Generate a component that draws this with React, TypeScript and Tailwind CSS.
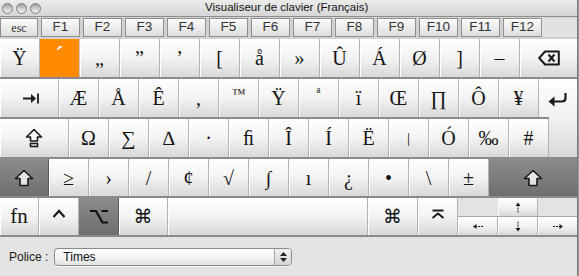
import type { ReactNode } from 'react'

// Keyboard viewer panel (Mac OS X, French layout, option+shift held)

const serif = "font-['Liberation_Serif','DejaVu_Serif',serif]"
const sans = "font-['Liberation_Sans','DejaVu_Sans',sans-serif]"

type Tone = 'light' | 'dark' | 'orange'

function Key({ w, tone = 'light', children, className = '' }: { w: string, tone?: Tone, children?: ReactNode, className?: string }) {
  const toneCls
    = tone === 'dark'
      ? 'border-[#5c5c5c] bg-linear-to-b from-[#8c8c8c] to-[#6e6e6e] text-[#111]'
      : tone === 'orange'
        ? 'border-[#c9c9c9] bg-[#ff8a00] text-white'
        : 'border-[#b2b2b2] bg-linear-to-b from-[#ffffff] via-[#f3f3f3] to-[#d8d8d8] text-[#141414] shadow-[inset_1px_0_0_#ffffff]'
  return (
    <div className={`${w} ${toneCls} flex h-full shrink-0 items-center justify-center border-r ${className}`}>
      {children}
    </div>
  )
}

function G({ children, className = 'text-[20px]' }: { children: ReactNode, className?: string }) {
  return <span className={`${serif} ${className} leading-none`}>{children}</span>
}

function ShiftIcon() {
  return (
    <svg width="20" height="18" viewBox="0 0 20 18">
      <path d="M10 1.5 L18.5 9.5 H14 V16.5 H6 V9.5 H1.5 Z" fill="#e4e4e4" stroke="#1a1a1a" strokeWidth="1.6" strokeLinejoin="round" />
    </svg>
  )
}

function CapsIcon() {
  return (
    <svg width="18" height="20" viewBox="0 0 18 20">
      <path d="M9 1.5 L16.5 9 H12.5 V13 H5.5 V9 H1.5 Z" fill="#fafafa" stroke="#1a1a1a" strokeWidth="1.6" strokeLinejoin="round" />
      <rect x="5.5" y="15.5" width="7" height="3" fill="#fafafa" stroke="#1a1a1a" strokeWidth="1.6" />
    </svg>
  )
}

function TabIcon() {
  return (
    <svg width="17" height="11" viewBox="0 0 17 11">
      <path d="M0 5.5 H10" stroke="#1a1a1a" strokeWidth="2" />
      <path d="M8 1 L13 5.5 L8 10 Z" fill="#1a1a1a" />
      <path d="M15 0.5 V10.5" stroke="#1a1a1a" strokeWidth="1.8" />
    </svg>
  )
}

function ReturnIcon() {
  return (
    <svg width="20" height="15" viewBox="0 0 20 15">
      <path d="M17.5 1 V6 Q17.5 9.5 14 9.5 H5" fill="none" stroke="#1a1a1a" strokeWidth="2.2" />
      <path d="M0.5 9.5 L6.5 4.5 V14.5 Z" fill="#1a1a1a" />
    </svg>
  )
}

function BackspaceIcon() {
  return (
    <svg width="22" height="16" viewBox="0 0 22 16">
      <path d="M1.2 8 L7 1.5 H20.8 V14.5 H7 Z" fill="none" stroke="#1a1a1a" strokeWidth="2" strokeLinejoin="round" />
      <path d="M10.5 4.5 L16.5 11.5 M16.5 4.5 L10.5 11.5" stroke="#1a1a1a" strokeWidth="2" />
    </svg>
  )
}

function CaretIcon() {
  return (
    <svg width="14" height="9" viewBox="0 0 14 9">
      <path d="M1.5 8 L7 2 L12.5 8" fill="none" stroke="#1a1a1a" strokeWidth="2.2" />
    </svg>
  )
}

function OptionIcon() {
  return (
    <svg width="20" height="15" viewBox="0 0 20 15">
      <path d="M1 2 H7 L13.5 13.5 H19 M12.5 2 H19" fill="none" stroke="#111" strokeWidth="2.2" />
    </svg>
  )
}

function EnterIcon() {
  return (
    <svg width="14" height="10" viewBox="0 0 14 10">
      <path d="M1.5 1.5 H12.5" stroke="#1a1a1a" strokeWidth="2" />
      <path d="M1.5 9 L7 4.5 L12.5 9" fill="none" stroke="#1a1a1a" strokeWidth="2" />
    </svg>
  )
}

function SmallArrow({ dir }: { dir: 'up' | 'down' | 'left' | 'right' }) {
  const rot = { up: 'rotate-0', down: 'rotate-180', left: '-rotate-90', right: 'rotate-90' }[dir]
  return (
    <svg width="8" height="11" viewBox="0 0 8 11" className={rot}>
      <path d="M4 10.5 V2" stroke="#1a1a1a" strokeWidth="1" strokeDasharray="2 1" />
      <path d="M1.5 4 L4 0.5 L6.5 4 Z" fill="#1a1a1a" />
    </svg>
  )
}

function Row({ h = 'h-[40px]', children }: { h?: string, children: ReactNode }) {
  return <div className={`flex ${h} border-b-2 border-[#8b8b8b]`}>{children}</div>
}

const row1 = ['„', '”', '’', '[', 'å', '»', 'Û', 'Á', 'Ø', ']', '–']
const row2 = ['Æ', 'Å', 'Ê', ',', '™', 'Ÿ', 'ª', 'ï', 'Œ', '∏', 'Ô', '¥']
const row3 = ['Ω', '∑', '∆', '·', 'ﬁ', 'Î', 'Í', 'Ë', '|', 'Ó', '‰', '#']
const row4 = ['≥', '›', '/', '¢', '√', '∫', 'ı', '¿', '•', '\\', '±']
const fkeys = ['F1', 'F2', 'F3', 'F4', 'F5', 'F6', 'F7', 'F8', 'F9', 'F10', 'F11', 'F12']

export default function App() {
  return (
    <div className="flex h-[276px] w-[579px] overflow-hidden bg-[#9a9a9a]">
      <div className="flex w-[578px] shrink-0 flex-col border-r border-[#7a7a7a] bg-[#e3e3e3]">
        {/* Title bar */}
        <div className="flex h-[17px] items-center border-b border-[#8e8e8e] bg-linear-to-b from-[#ececec] to-[#d6d6d6]">
          <div className="flex w-[205px] items-center gap-[3px] pl-[2px]">
            {[0, 1, 2].map(i => (
              <span key={i} className="h-[11px] w-[11px] rounded-full border border-[#7e7e7e] bg-linear-to-b from-[#9c9c9c] via-[#cfcfcf] to-[#ededed]" />
            ))}
          </div>
          <span className={`${sans} text-[11.5px] text-[#111]`}>Visualiseur de clavier (Français)</span>
        </div>

        {/* Function keys */}
        <div className="flex h-[22px] items-start bg-[#d2d2d2] pt-px">
          <div className="flex h-[19px] w-[38px] shrink-0 items-center justify-center border border-[#8f8f8f] bg-linear-to-b from-[#fbfbfb] to-[#dedede]">
            <span className={`${serif} text-[12px] text-[#333]`}>esc</span>
          </div>
          {fkeys.map(f => (
            <div key={f} className="ml-[3px] flex h-[19px] w-[39px] shrink-0 items-center justify-center border border-[#8f8f8f] bg-linear-to-b from-[#fbfbfb] to-[#dedede] shadow-[inset_0_1px_0_#ffffff]">
              <span className={`${sans} text-[13.5px] text-[#333]`}>{f}</span>
            </div>
          ))}
          <div className="h-[19px] flex-1 bg-[#e2e2e2]" />
        </div>

        {/* Row 1 */}
        <Row>
          <Key w="w-[40px]"><G>Ÿ</G></Key>
          <Key w="w-[40px]" tone="orange"><G className="mb-[4px] text-[28px]">´</G></Key>
          {row1.map((c, i) => (
            <Key key={i} w="w-[40px]"><G>{c}</G></Key>
          ))}
          <Key w="w-[57px]" className="border-r-0"><BackspaceIcon /></Key>
        </Row>

        {/* Row 2 + return top */}
        <div className="flex h-[40px]">
          <div className="flex w-[539px] border-b-2 border-[#8b8b8b]">
            <Key w="w-[59px]"><span className="pl-[4px]"><TabIcon /></span></Key>
            {row2.map((c, i) => (
              <Key key={i} w="w-[40px]">
                <G className={c === '™' || c === 'ª' ? 'mb-[8px] text-[14px]' : 'text-[20px]'}>{c}</G>
              </Key>
            ))}
          </div>
          <div className="flex w-[38px] flex-col bg-linear-to-b from-[#ffffff] to-[#f0f0f0]">
            <div className="flex flex-1 items-center justify-center pt-[2px]"><ReturnIcon /></div>
            <div className="h-[2px] w-[10px] bg-[#8b8b8b]" />
          </div>
        </div>

        {/* Row 3 + return bottom */}
        <Row>
          <Key w="w-[69px]"><CapsIcon /></Key>
          {row3.map((c, i) => (
            <Key key={i} w="w-[40px]">
              <G className={c === '|' ? 'text-[15px]' : 'text-[20px]'}>{c}</G>
            </Key>
          ))}
          <div className="w-[28px] bg-linear-to-b from-[#f0f0f0] to-[#d8d8d8]" />
        </Row>

        {/* Row 4 */}
        <Row h="h-[39px]">
          <Key w="w-[49px]" tone="dark"><ShiftIcon /></Key>
          {row4.map((c, i) => (
            <Key key={i} w="w-[40px]"><G>{c}</G></Key>
          ))}
          <Key w="w-[88px]" tone="dark" className="border-r-0"><ShiftIcon /></Key>
        </Row>

        {/* Row 5 */}
        <Row h="h-[39px]">
          <Key w="w-[39px]"><G className="text-[21px]">fn</G></Key>
          <Key w="w-[40px]"><span className="mb-[6px]"><CaretIcon /></span></Key>
          <Key w="w-[40px]" tone="dark"><OptionIcon /></Key>
          <Key w="w-[49px]"><span className="font-['DejaVu_Sans',sans-serif] text-[19px] leading-none">⌘</span></Key>
          <Key w="w-[200px]" />
          <Key w="w-[50px]"><span className="font-['DejaVu_Sans',sans-serif] text-[19px] leading-none">⌘</span></Key>
          <Key w="w-[40px]"><span className="mb-[6px]"><EnterIcon /></span></Key>
          <div className="flex w-[119px] flex-col">
            <div className="flex h-[19px] border-b border-[#a8a8a8]">
              <div className="w-[40px] bg-[#e3e3e3]" />
              <Key w="w-[40px]"><SmallArrow dir="up" /></Key>
              <div className="flex-1 bg-[#e3e3e3]" />
            </div>
            <div className="flex flex-1">
              <Key w="w-[40px]"><SmallArrow dir="left" /></Key>
              <Key w="w-[40px]"><SmallArrow dir="down" /></Key>
              <Key w="w-[39px]" className="border-r-0"><SmallArrow dir="right" /></Key>
            </div>
          </div>
        </Row>

        {/* Font chooser */}
        <div className="flex flex-1 items-center pl-[9px]">
          <span className={`${sans} text-[12px] text-[#1a1a1a]`}>Police :</span>
          <div className="ml-[6px] flex h-[18px] w-[238px] items-stretch overflow-hidden rounded-[4px] border border-[#8a8a8a] bg-linear-to-b from-[#ffffff] via-[#f5f5f5] to-[#e2e2e2] shadow-[0_1px_0_#f6f6f6]">
            <span className={`${sans} flex flex-1 items-center pl-[8px] text-[12px] text-[#111]`}>Times</span>
            <div className="flex w-[17px] flex-col items-center justify-center gap-[2px] border-l border-[#a9a9a9] bg-linear-to-b from-[#f2f2f2] to-[#d4d4d4]">
              <svg width="7" height="4" viewBox="0 0 7 4"><path d="M0 4 L3.5 0 L7 4 Z" fill="#222" /></svg>
              <svg width="7" height="4" viewBox="0 0 7 4"><path d="M0 0 L3.5 4 L7 0 Z" fill="#222" /></svg>
            </div>
          </div>
        </div>
      </div>
    </div>
  )
}
